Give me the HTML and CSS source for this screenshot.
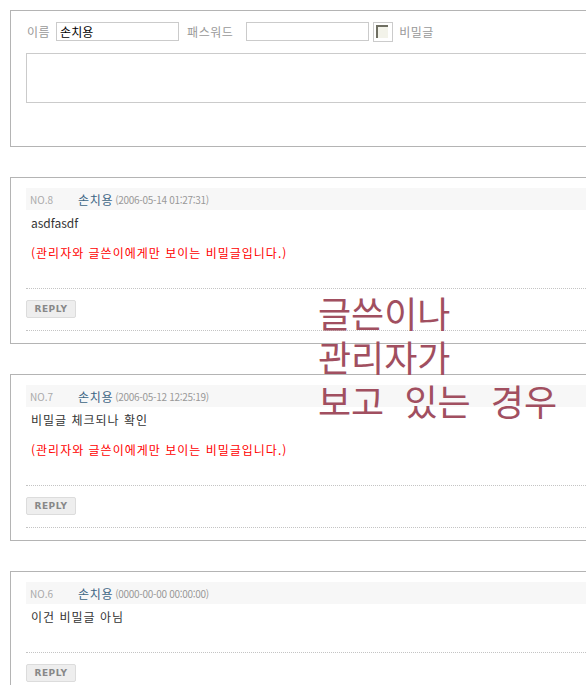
FILE: index.html
```html
<!DOCTYPE html>
<html lang="ko">
<head>
    <meta charset="UTF-8">
    <meta name="viewport" content="width=device-width, initial-scale=1.0">
    <link rel="stylesheet" href="styles.css">
    <title>Comments</title>
</head>
<body>
    <div class="box write-box">
        <div class="write-row">
            <label class="label">이름</label>
            <input type="text" class="field" value="손치용">
            <label class="label label-pw">패스워드</label>
            <input type="password" class="field">
            <span class="check"><span class="check-inner"></span></span>
            <span class="label">비밀글</span>
        </div>
        <textarea class="memo"></textarea>
    </div>

    <div class="box comment">
        <div class="comment-head">
            <span class="no">NO.8</span>
            <span class="name">손치용</span>
            <span class="date">(2006-05-14 01:27:31)</span>
        </div>
        <div class="comment-body">
            <p class="latin">asdfasdf</p>
            <p class="secret">(관리자와 글쓴이에게만 보이는 비밀글입니다.)</p>
        </div>
        <div class="comment-foot">
            <button type="button" class="reply">REPLY</button>
        </div>
    </div>

    <div class="box comment">
        <div class="comment-head">
            <span class="no">NO.7</span>
            <span class="name">손치용</span>
            <span class="date">(2006-05-12 12:25:19)</span>
        </div>
        <div class="comment-body">
            <p>비밀글 체크되나 확인</p>
            <p class="secret">(관리자와 글쓴이에게만 보이는 비밀글입니다.)</p>
        </div>
        <div class="comment-foot">
            <button type="button" class="reply">REPLY</button>
        </div>
    </div>

    <div class="box comment">
        <div class="comment-head">
            <span class="no">NO.6</span>
            <span class="name">손치용</span>
            <span class="date">(0000-00-00 00:00:00)</span>
        </div>
        <div class="comment-body">
            <p>이건 비밀글 아님</p>
        </div>
        <div class="comment-foot">
            <button type="button" class="reply">REPLY</button>
        </div>
    </div>

    <div class="note">글쓴이나<br>관리자가<br>보고&nbsp; 있는&nbsp; 경우</div>
</body>
</html>
```

FILE: styles.css
```css
body {
    margin: 0;
    padding: 10px;
    overflow: hidden;
    background: #fff;
    font-family: "Noto Sans CJK KR", "Noto Sans", sans-serif;
    font-size: 12px;
    color: #333;
}

.box {
    width: 640px;
    border: 1px solid #b4b4b4;
    padding: 10px 15px 12px;
    margin-bottom: 30px;
}

/* write form */
.write-box {
    padding-top: 11px;
    padding-bottom: 43px;
}

.write-row {
    display: flex;
    align-items: center;
    height: 19px;
}

.label {
    color: #999;
    font-size: 12px;
    letter-spacing: 0.5px;
    margin: 0 6px 0 1px;
    line-height: 19px;
}

.label-pw {
    margin-left: 8px;
    margin-right: 13px;
}

.field {
    width: 123px;
    height: 19px;
    box-sizing: border-box;
    border: 1px solid #cbcbcb;
    padding: 0 3px;
    font-family: "Noto Sans CJK KR", sans-serif;
    font-size: 12px;
    color: #000;
    outline: none;
}

.check {
    width: 20px;
    height: 20px;
    box-sizing: border-box;
    border: 1px solid #cbcbcb;
    margin: 0 5px 0 4px;
    padding: 2px;
}

.check-inner {
    display: block;
    width: 12px;
    height: 13px;
    box-sizing: border-box;
    border-top: 2px solid #6f6f62;
    border-left: 2px solid #6f6f62;
    background: #f3f3ea;
}

.memo {
    display: block;
    width: 100%;
    height: 50px;
    box-sizing: border-box;
    margin-top: 12px;
    border: 1px solid #cbcbcb;
    resize: none;
}

/* comments */
.comment-head {
    display: flex;
    align-items: center;
    height: 22px;
    background: #f7f7f7;
    padding-left: 4px;
}

.no {
    width: 48px;
    font-size: 10px;
    color: #aaa;
}

.name {
    font-size: 12px;
    letter-spacing: 0.7px;
    color: #3c6584;
    margin-right: 2px;
}

.date {
    font-size: 10px;
    letter-spacing: -0.3px;
    color: #999;
}

.comment-body {
    padding: 3px 5px 25px;
    border-bottom: 1px dotted #c4c4c4;
}

.comment-body p {
    margin: 0;
    line-height: 20px;
    letter-spacing: 1px;
}

.comment-body .latin {
    letter-spacing: 0;
}

.comment-body .secret {
    margin-top: 10px;
    color: #ff0000;
}

.comment-foot {
    padding: 11px 0 12px;
    border-bottom: 1px dotted #c4c4c4;
}

.reply {
    display: block;
    width: 50px;
    height: 18px;
    padding: 0;
    border: 1px solid #dcdcdc;
    border-radius: 2px;
    background: #eeeeee;
    font-family: "DejaVu Sans", sans-serif;
    font-weight: bold;
    font-size: 9px;
    letter-spacing: 0.5px;
    color: #888;
    cursor: pointer;
}

/* caption laid over the page */
.note {
    position: absolute;
    left: 318px;
    top: 290px;
    font-size: 36px;
    line-height: 44px;
    color: #a14f60;
}
```
